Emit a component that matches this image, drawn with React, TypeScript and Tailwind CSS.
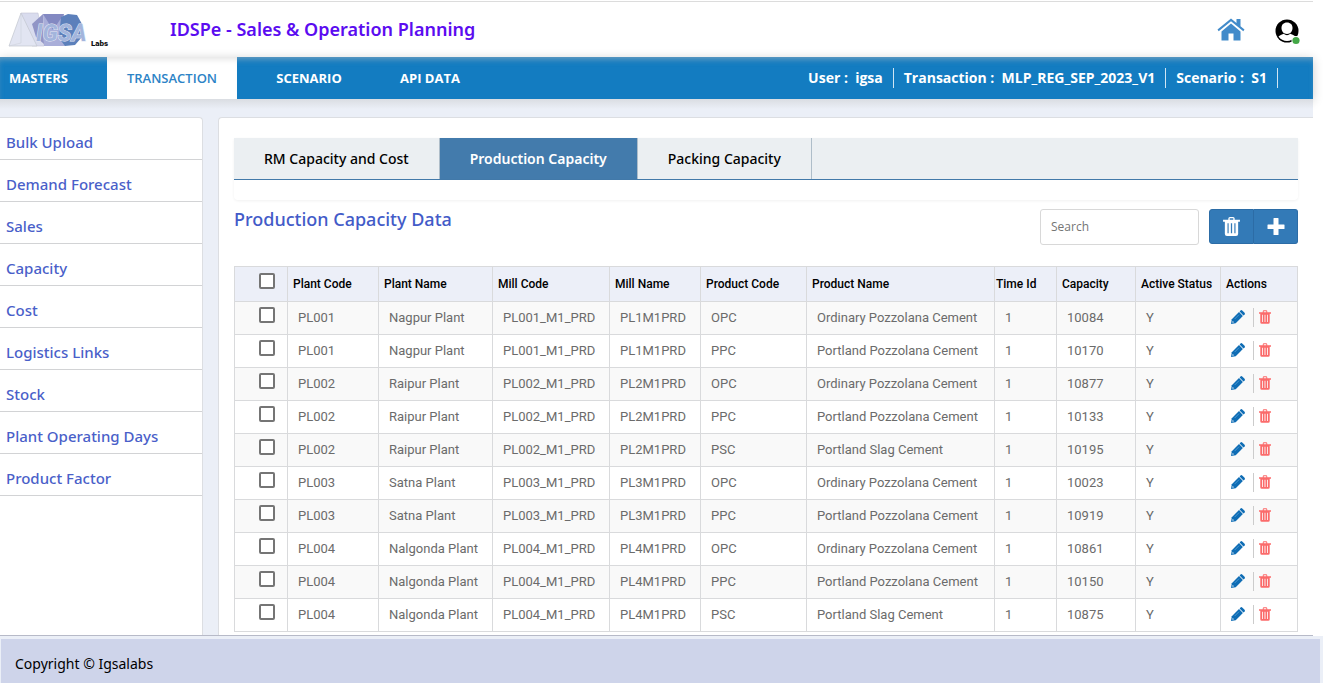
import React from "react";

const rows = [
  ["PL001", "Nagpur Plant", "PL001_M1_PRD", "PL1M1PRD", "OPC", "Ordinary Pozzolana Cement", "1", "10084", "Y"],
  ["PL001", "Nagpur Plant", "PL001_M1_PRD", "PL1M1PRD", "PPC", "Portland Pozzolana Cement", "1", "10170", "Y"],
  ["PL002", "Raipur Plant", "PL002_M1_PRD", "PL2M1PRD", "OPC", "Ordinary Pozzolana Cement", "1", "10877", "Y"],
  ["PL002", "Raipur Plant", "PL002_M1_PRD", "PL2M1PRD", "PPC", "Portland Pozzolana Cement", "1", "10133", "Y"],
  ["PL002", "Raipur Plant", "PL002_M1_PRD", "PL2M1PRD", "PSC", "Portland Slag Cement", "1", "10195", "Y"],
  ["PL003", "Satna Plant", "PL003_M1_PRD", "PL3M1PRD", "OPC", "Ordinary Pozzolana Cement", "1", "10023", "Y"],
  ["PL003", "Satna Plant", "PL003_M1_PRD", "PL3M1PRD", "PPC", "Portland Pozzolana Cement", "1", "10919", "Y"],
  ["PL004", "Nalgonda Plant", "PL004_M1_PRD", "PL4M1PRD", "OPC", "Ordinary Pozzolana Cement", "1", "10861", "Y"],
  ["PL004", "Nalgonda Plant", "PL004_M1_PRD", "PL4M1PRD", "PPC", "Portland Pozzolana Cement", "1", "10150", "Y"],
  ["PL004", "Nalgonda Plant", "PL004_M1_PRD", "PL4M1PRD", "PSC", "Portland Slag Cement", "1", "10875", "Y"],
];

const columns = [
  { label: "Plant Code", width: "w-[91px]" },
  { label: "Plant Name", width: "w-[114px]" },
  { label: "Mill Code", width: "w-[117px]" },
  { label: "Mill Name", width: "w-[91px]" },
  { label: "Product Code", width: "w-[106px]" },
  { label: "Product Name", width: "" },
  { label: "Time Id", width: "w-[62px]" },
  { label: "Capacity", width: "w-[79px]" },
  { label: "Active Status", width: "w-[85px]" },
];

const menu = [
  "Bulk Upload",
  "Demand Forecast",
  "Sales",
  "Capacity",
  "Cost",
  "Logistics Links",
  "Stock",
  "Plant Operating Days",
  "Product Factor",
];

function Logo() {
  return (
    <svg className="block h-10 w-[106px]" viewBox="0 0 106 40" role="img" aria-label="IGSA Labs">
      <path d="M13 3H30L36 36H24Z" fill="#d9dcee" stroke="#c3c5d5" strokeWidth="0.6" />
      <path d="M1 36 13 3 29 36Z" fill="#e2e5f2" stroke="#c2c5cf" strokeWidth="0.7" />
      <path d="M13 3V33L1 36" fill="none" stroke="#cfd2da" strokeWidth="0.6" />
      <path d="M24 14 35 4 36 34 28 27Z" fill="#9195c6" />
      <path d="M35 4 56 4 58 36H36Z" fill="#a9aed9" />
      <path d="M35 4 45 20 56 4 50 4Z" fill="#8389c2" />
      <path d="M53 7 60 4 69 5 74 14 74 27 67 35 57 36 51 28Z" fill="#5c80bb" />
      <text
        x="28"
        y="31"
        fontFamily="Roboto, sans-serif"
        fontStyle="italic"
        fontWeight="700"
        fontSize="23"
        fill="#a3b5dc"
        stroke="#e3e8f5"
        strokeWidth="1"
        paintOrder="stroke"
      >
        IGSA
      </text>
      <text x="83" y="36" fontFamily="Roboto, sans-serif" fontWeight="900" fontSize="8" fill="#111">
        Labs
      </text>
    </svg>
  );
}

function HomeIcon() {
  return (
    <svg className="block h-6 w-[28px]" viewBox="0 0 28 24" fill="#428bca" aria-hidden="true">
      <path d="M14 5.5 4.500 13.500V22.500H11.500V15.500H16.500V22.500H23.500V13.500Z" />
      <path d="M14 0.500 19.500 5V1H23.500V8.300L27.500 11.600 26.300 13.200 14 3.200 1.700 13.200 0.500 11.600Z" />
    </svg>
  );
}

function UserIcon() {
  return (
    <svg className="block h-[26px] w-[26px]" viewBox="0 0 26 26" aria-hidden="true">
      <circle cx="12" cy="12" r="11.5" fill="#000" />
      <path d="M12 3.500C15.500 3.500 17.500 5.800 17.500 8.800C17.500 12.200 15.500 15 12 15C8.500 15 6.500 12.200 6.500 8.800C6.500 5.800 8.500 3.500 12 3.500Z" fill="#fff" />
      <path d="M3.500 17.500C5.500 15.800 7.300 15.600 8.600 14.800Q12 17.500 15.400 14.800C16.700 15.600 18.500 15.800 20.500 17.500A10.200 10.200 0 0 1 3.500 17.500Z" fill="#fff" />
      <circle cx="21" cy="21.500" r="4.500" fill="#fff" />
      <circle cx="21" cy="21.500" r="3.600" fill="#43a746" />
    </svg>
  );
}

function TrashIcon({ className }: { className: string }) {
  return (
    <svg className={className} viewBox="0 0 16 18" fill="currentColor" aria-hidden="true">
      <path
        fillRule="evenodd"
        d="M5 2.500V1.500Q5 0 6.500 0H9.500Q11 0 11 1.500V2.500H16V4.500H14.300V16Q14.300 18 12.300 18H3.700Q1.700 18 1.700 16V4.500H0V2.500ZM6.300 2.500H9.700V1.300H6.300ZM4.200 6V15.500H5.300V6ZM7.400 6V15.500H8.600V6ZM10.700 6V15.500H11.800V6Z"
      />
    </svg>
  );
}

function PlusIcon() {
  return (
    <svg className="h-[18px] w-[18px]" viewBox="0 0 18 18" fill="currentColor" aria-hidden="true">
      <path d="M7 0H11Q11.500 0 11.500 0.500V6.500H17Q17.500 6.500 17.500 7V10.500Q17.500 11 17 11H11.500V16.500Q11.500 17 11 17H7Q6.500 17 6.500 16.500V11H1Q0.500 11 0.500 10.500V7Q0.500 6.500 1 6.500H6.500V0.500Q6.500 0 7 0Z" />
    </svg>
  );
}

function PencilIcon() {
  return (
    <svg className="h-3.5 w-3.5" viewBox="0 0 14 14" fill="currentColor" aria-hidden="true">
      <path d="M0 14 0.800 9.300 8 2.100 11.900 6 4.700 13.200Z" />
      <path d="M8.600 1.500 9.800 0.300Q10.500 -0.200 11.200 0.400L13.600 2.800Q14.200 3.500 13.700 4.200L12.500 5.400Z" />
      <path d="M1.700 11 3 12.300 1.300 12.700Z" fill="#fff" />
      <path d="M3.700 9 8 4.700" stroke="#6faede" strokeWidth="0.6" />
    </svg>
  );
}

const box =
  "block h-4 w-4 appearance-none rounded-[2px] border-2 border-[#757575] bg-white checked:bg-[#757575]";

export default function App() {
  return (
    <div className="min-h-screen bg-white pt-px pr-2.5 font-['Noto_Sans',sans-serif]">
      <header className="flex h-14 items-center border-t border-[#dcdcdc] bg-white pr-3 pl-2">
        <Logo />
        <h1 className="ml-14 pb-0.5 text-lg font-semibold text-[#5b0cf0]">IDSPe - Sales &amp; Operation Planning</h1>
        <div className="ml-auto flex items-center gap-[30px]">
          <a href="#home" aria-label="Home"><HomeIcon /></a>
          <button type="button" aria-label="Account" className="pt-1"><UserIcon /></button>
        </div>
      </header>

      <nav className="flex h-[42px] bg-[#137cc1] font-['Open_Sans',sans-serif] text-[13px] font-bold text-white shadow-[0_2px_10px_rgba(0,0,0,0.2),inset_0_5px_6px_-3px_rgba(190,190,190,0.55)]">
        <a href="#masters" className="flex w-[107px] items-center pt-0.5 pl-[9px]">MASTERS</a>
        <a href="#transaction" className="flex w-[130px] items-center justify-center bg-white pt-0.5 font-semibold text-[#2c83c6] shadow-[inset_0_6px_6px_-4px_rgba(0,0,0,0.12)]">TRANSACTION</a>
        <a href="#scenario" className="flex w-[144px] items-center justify-center pt-0.5">SCENARIO</a>
        <a href="#api" className="flex w-[98px] items-center justify-center pt-0.5">API DATA</a>
        <div className="ml-auto flex items-center pr-[35px] text-sm">
          <span className="border-r border-white/80 pr-2.5">User :&nbsp; igsa</span>
          <span className="border-r border-white/80 px-2.5">Transaction :&nbsp; MLP_REG_SEP_2023_V1</span>
          <span className="border-r border-white/80 px-2.5">Scenario :&nbsp; S1</span>
        </div>
      </nav>

      <div className="flex gap-[15px] bg-[#ebeff7] bg-[linear-gradient(to_bottom,#dadde2,#ebeff7_10px)] pt-[18px]">
        <aside className="w-[203px] shrink-0 rounded-tr border-t border-r border-[#dcdee2] bg-white">
          <ul>
            {menu.map((item) => (
              <li key={item} className="h-[42px] border-b border-[#d2d3d5]">
                <a href="#menu" className="flex h-full items-center pt-2 pl-1.5 text-[15px] font-medium text-[#4a5fc9]">{item}</a>
              </li>
            ))}
          </ul>
        </aside>

        <main className="min-w-0 flex-1 rounded-tl border-t border-l border-[#dcdee2] bg-white px-[15px] pt-5 pb-[3px]">
          <div className="rounded-b pb-5 shadow-[0_1px_3px_rgba(0,0,0,0.06)]">
            <div role="tablist" className="flex h-[42px] border-b border-[#4279a9] bg-[#ebeff2] text-sm font-medium text-black">
              <button type="button" role="tab" aria-selected="false" className="border-r border-[#aebdc9] px-[30px]">RM Capacity and Cost</button>
              <button type="button" role="tab" aria-selected="true" className="border-r border-[#aebdc9] bg-[#437bac] px-[30px] font-semibold text-white">Production Capacity</button>
              <button type="button" role="tab" aria-selected="false" className="border-r border-[#aebdc9] px-[30px]">Packing Capacity</button>
            </div>
          </div>

          <div className="flex h-[66px] items-start pt-[9px]">
            <h2 className="text-lg leading-5 font-medium text-[#435bc8]">Production Capacity Data</h2>
            <input
              type="text"
              aria-label="Search"
              placeholder="Search"
              className="ml-auto h-9 w-[159px] rounded-[3px] border border-[#d8d8d8] px-2.5 pb-0.5 font-['Open_Sans',sans-serif] text-xs text-[#555] placeholder:text-[#757575]"
            />
            <button type="button" aria-label="Delete selected" className="ml-2.5 flex h-[35px] w-[45px] items-center justify-center rounded-l-[3px] border border-[#2c6ca6] bg-[#337ab7] text-white">
              <TrashIcon className="h-[19px] w-[17px]" />
            </button>
            <button type="button" aria-label="Add" className="flex h-[35px] w-11 items-center justify-center rounded-r-[3px] border border-l-0 border-[#2c6ca6] bg-[#337ab7] text-white">
              <PlusIcon />
            </button>
          </div>

          <table className="w-full table-fixed border-collapse border border-[#d9dadc] text-left font-['Roboto',sans-serif]">
            <thead>
              <tr className="h-[35px] bg-[#eceff8] text-xs text-black">
                <th className="w-[53px] border border-[#d9dadc] p-0 pb-1.5 pl-6">
                  <input type="checkbox" aria-label="Select all rows" className={box} />
                </th>
                {columns.map((c) => (
                  <th
                    key={c.label}
                    className={`border border-[#d9dadc] p-0 font-medium whitespace-nowrap ${c.width} ${c.label === "Time Id" ? "pl-px" : "pl-[5px]"}`}
                  >
                    {c.label}
                  </th>
                ))}
                <th className="w-[77px] border border-[#d9dadc] p-0 pl-[5px] font-medium">Actions</th>
              </tr>
            </thead>
            <tbody>
              {rows.map((row, i) => (
                <tr key={i} className="h-[33px] text-[13px] text-[#6b6b6b] odd:bg-[#f9f9f9]">
                  <td className="border border-[#d9dadc] p-0 pb-1.5 pl-6">
                    <input type="checkbox" aria-label={`Select row ${i + 1}`} className={box} />
                  </td>
                  {row.map((cell, j) => (
                    <td key={j} className="border border-[#d9dadc] p-0 pl-2.5 whitespace-nowrap">{cell}</td>
                  ))}
                  <td className="border border-[#d9dadc] p-0 pl-2.5">
                    <div className="flex items-center pb-0.5">
                      <button type="button" aria-label="Edit" className="text-[#0f6db5]">
                        <PencilIcon />
                      </button>
                      <button type="button" aria-label="Delete" className="ml-2 flex h-[19px] items-center border-l border-[#ccc] pl-[5px] text-[#fb6b6b]">
                        <TrashIcon className="h-3.5 w-3" />
                      </button>
                    </div>
                  </td>
                </tr>
              ))}
            </tbody>
          </table>
        </main>
      </div>

      <footer className="border-t border-[#b7bac8]">
        <div className="-mr-2.5 bg-[#ebeff7] pt-[3px] pr-[3px] pl-px">
          <div className="flex h-11 items-center bg-[#ced4ea] pt-1.5 pl-3.5 text-sm text-black">Copyright © Igsalabs</div>
        </div>
      </footer>
    </div>
  );
}
